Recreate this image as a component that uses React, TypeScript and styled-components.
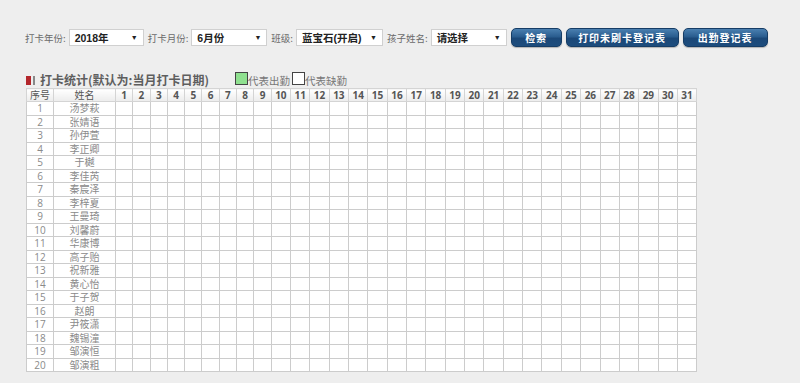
import React from "react";
import styled, { createGlobalStyle } from "styled-components";

const Global = createGlobalStyle`
  html, body { margin: 0; padding: 0; background: #eeeeee; }
  body { font-family: "Open Sans", "Noto Sans CJK SC", sans-serif; }
`;

const Page = styled.div`
  padding: 28px 0 0 25px;
  width: 800px;
  height: 383px;
  box-sizing: border-box;
  overflow: hidden;
`;

const Toolbar = styled.div`
  display: flex;
  align-items: center;
  height: 19px;
`;

const Label = styled.span`
  font-size: 9.5px;
  color: #6a6a6a;
  margin-right: 3px;
  white-space: nowrap;
  font-family: "Noto Sans CJK SC", sans-serif;
`;

const SelectBox = styled.div<{ $w: number }>`
  width: ${(p) => p.$w}px;
  height: 17px;
  box-sizing: border-box;
  background: #fff;
  border: 1px solid #d0d0d0;
  display: flex;
  align-items: center;
  justify-content: space-between;
  padding: 0 5px 0 5px;
  margin-right: 4px;
  font-size: 10.5px;
  font-weight: bold;
  color: #222;
  white-space: nowrap;
  font-family: "Liberation Sans", "Noto Sans CJK SC", sans-serif;
`;

const Arrow = styled.span`
  font-size: 7px;
  color: #222;
`;

const Button = styled.button<{ $w: number }>`
  width: ${(p) => p.$w}px;
  height: 19px;
  margin-right: 4px;
  padding: 0;
  border: 1px solid #163d66;
  border-radius: 5px;
  background: linear-gradient(#4a7fb0 0%, #2a5d8f 45%, #1b4878 55%, #1d4c7d 100%);
  color: #fff;
  font-size: 10px;
  font-weight: bold;
  letter-spacing: 1px;
  font-family: "Noto Sans CJK SC", sans-serif;
  box-shadow: 0 1px 1px rgba(0, 0, 0, 0.25);
  cursor: pointer;
`;

const TitleRow = styled.div`
  display: flex;
  align-items: center;
  margin: 24px 0 0 1px;
  height: 16px;
`;

const TitleIcon = styled.span`
  display: inline-flex;
  gap: 2px;
  margin-right: 5px;
  margin-top: 2px;
`;

const IconBar = styled.span<{ $c: string; $w: number }>`
  width: ${(p) => p.$w}px;
  height: 9px;
  background: ${(p) => p.$c};
`;

const Title = styled.span`
  font-size: 12px;
  font-weight: bold;
  color: #5e5e5e;
  font-family: "Noto Sans CJK SC", sans-serif;
  line-height: 16px;
  margin-top: 2px;
`;

const Legend = styled.div`
  display: flex;
  align-items: center;
  margin-left: 26px;
  margin-top: -2px;
`;

const LegendBox = styled.span<{ $bg: string }>`
  width: 11px;
  height: 11px;
  background: ${(p) => p.$bg};
  border: 1px solid #444;
`;

const LegendText = styled.span`
  font-size: 10.5px;
  color: #777;
  font-family: "Noto Sans CJK SC", sans-serif;
  margin-right: 2px;
  margin-top: 5px;
  line-height: 13px;
`;

const Table = styled.table`
  border-collapse: collapse;
  table-layout: fixed;
  width: 671px;
  margin-top: 1px;
  margin-left: 1px;
  background: #fff;
  border: 1px solid #cfcfcf;
`;

const Col = styled.col<{ $w: number }>`
  width: ${(p) => p.$w}px;
`;

const Th = styled.th`
  height: 12px;
  padding: 0;
  border: 1px solid #d4d4d4;
  background: linear-gradient(#ffffff, #ececec);
  font-size: 10px;
  font-weight: bold;
  color: #555;
  text-align: center;
  line-height: 12px;
  overflow: hidden;
  font-family: "Open Sans", "Noto Sans CJK SC", sans-serif;
`;

const ThName = styled(Th)`
  font-weight: normal;
  font-size: 10px;
  color: #555;
  font-family: "Noto Sans CJK SC", sans-serif;
`;

const Tr = styled.tr`
  height: 13.5px;
`;

const Td = styled.td`
  padding: 0;
  border: 1px solid #cccccc;
  font-size: 10px;
  color: #8a8a8a;
  text-align: center;
  line-height: 12px;
  overflow: hidden;
  font-family: "Open Sans", "Noto Sans CJK SC", sans-serif;
`;

const TdName = styled(Td)`
  font-size: 10px;
  font-family: "Noto Sans CJK SC", sans-serif;
`;

const names = [
  "汤梦萩", "张婧语", "孙伊萱", "李正卿", "于樾", "李佳芮", "秦宸泽", "李梓夏", "王曼琦", "刘馨蔚",
  "华康博", "高子贻", "祝新雅", "黄心怡", "于子贺", "赵朗", "尹筱潇", "魏锡潼", "邹演恒", "邹演粗",
];

const days = Array.from({ length: 31 }, (_, i) => i + 1);

export default function App() {
  return (
    <>
      <Global />
      <Page>
        <Toolbar>
          <Label>打卡年份:</Label>
          <SelectBox $w={75}>
            <span>2018年</span>
            <Arrow>▼</Arrow>
          </SelectBox>
          <Label>打卡月份:</Label>
          <SelectBox $w={76}>
            <span>6月份</span>
            <Arrow>▼</Arrow>
          </SelectBox>
          <Label>班级:</Label>
          <SelectBox $w={87}>
            <span>蓝宝石(开启)</span>
            <Arrow>▼</Arrow>
          </SelectBox>
          <Label>孩子姓名:</Label>
          <SelectBox $w={76}>
            <span>请选择</span>
            <Arrow>▼</Arrow>
          </SelectBox>
          <Button $w={51}>检索</Button>
          <Button $w={113}>打印未刷卡登记表</Button>
          <Button $w={85}>出勤登记表</Button>
        </Toolbar>

        <TitleRow>
          <TitleIcon>
            <IconBar $c="#b3262b" $w={5} />
            <IconBar $c="#888" $w={2} />
          </TitleIcon>
          <Title>打卡统计(默认为:当月打卡日期)</Title>
          <Legend>
            <LegendBox $bg="#8fe08f" />
            <LegendText>代表出勤</LegendText>
            <LegendBox $bg="#fff" />
            <LegendText>代表缺勤</LegendText>
          </Legend>
        </TitleRow>

        <Table>
          <colgroup>
            <Col $w={27} />
            <Col $w={62} />
            {days.map((d) => (
              <Col key={d} $w={d < 10 ? 17.3 : 19.35} />
            ))}
          </colgroup>
          <thead>
            <tr>
              <ThName>序号</ThName>
              <ThName>姓名</ThName>
              {days.map((d) => (
                <Th key={d}>{d}</Th>
              ))}
            </tr>
          </thead>
          <tbody>
            {names.map((n, i) => (
              <Tr key={i}>
                <Td>{i + 1}</Td>
                <TdName>{n}</TdName>
                {days.map((d) => (
                  <Td key={d} />
                ))}
              </Tr>
            ))}
          </tbody>
        </Table>
      </Page>
    </>
  );
}
